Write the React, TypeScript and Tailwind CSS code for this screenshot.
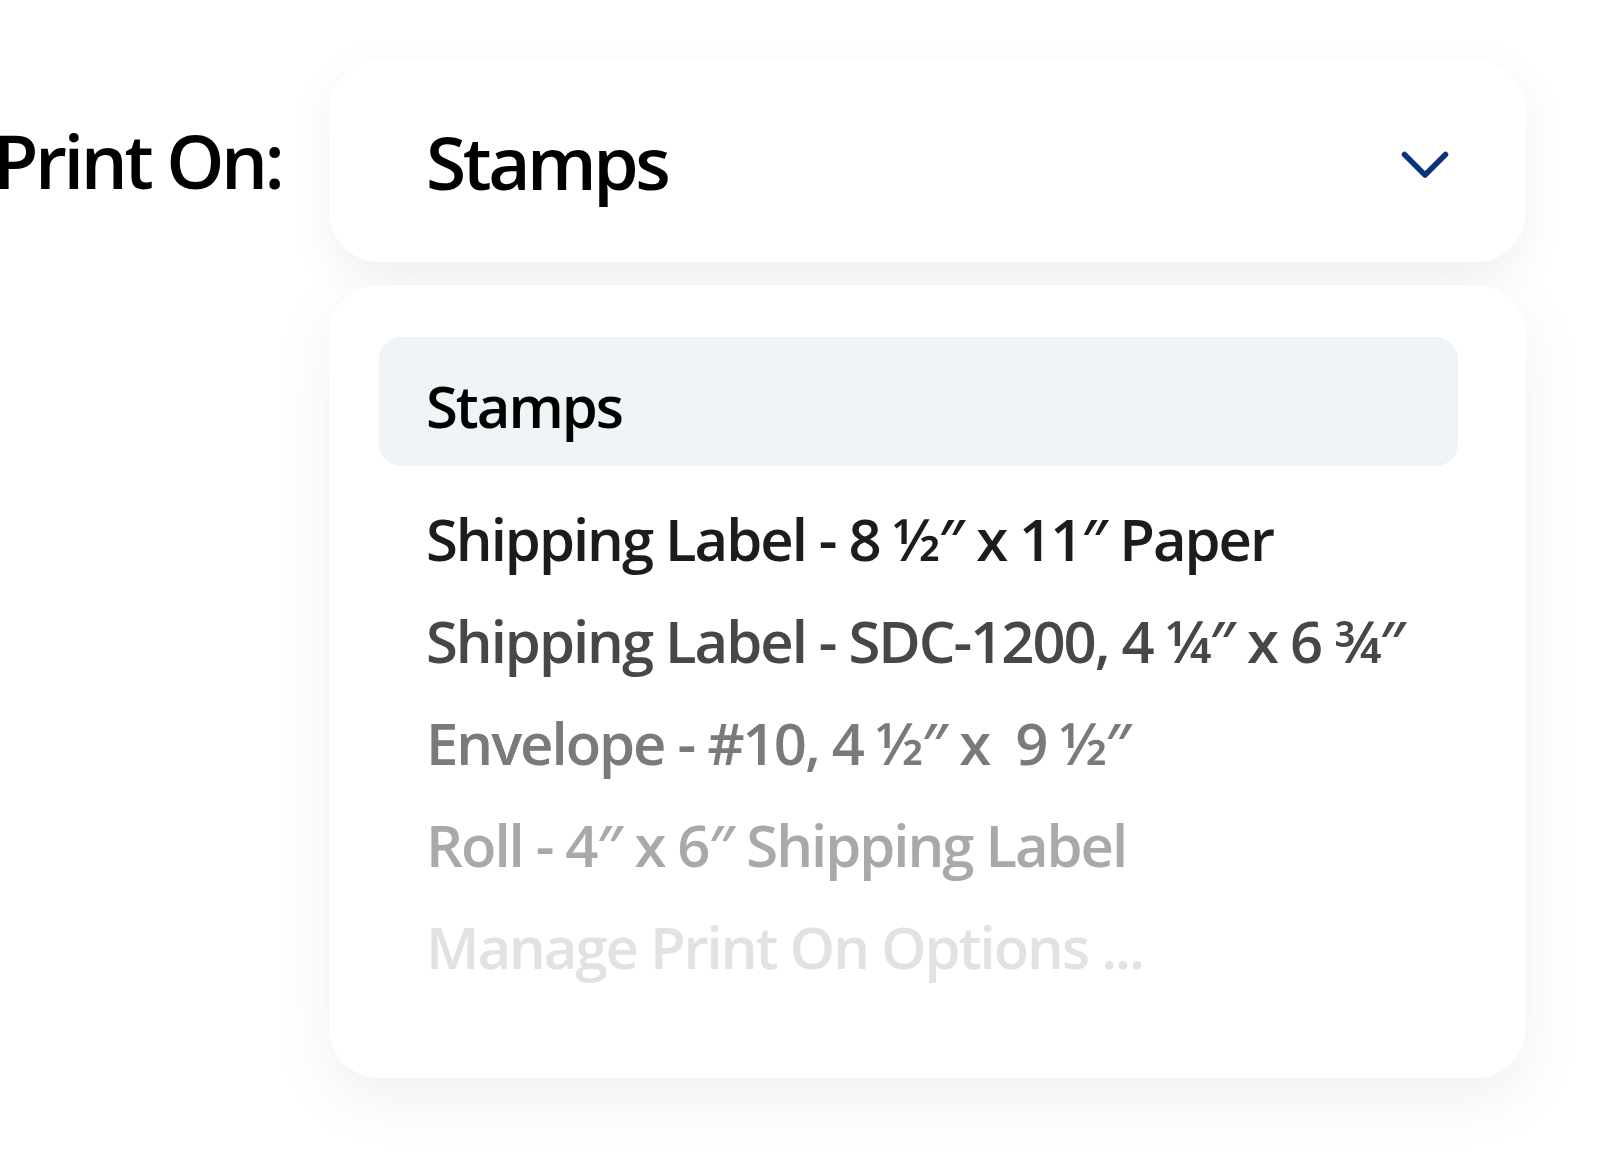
const options = [
  { label: "Shipping Label - 8 ½″ x 11″ Paper", color: "text-[#1c1c1c]" },
  { label: "Shipping Label - SDC-1200, 4 ¼″ x 6 ¾″", color: "text-[#474747]" },
  { label: "Envelope - #10, 4 ½″ x  9 ½″", color: "text-[#7a7a7a]" },
  { label: "Roll - 4″ x 6″ Shipping Label", color: "text-[#a9a9a9]" },
  { label: "Manage Print On Options ...", color: "text-[#e2e2e2]" },
];

export default function App() {
  return (
    <div
      className="w-[1598px] h-[1164px] bg-white overflow-hidden pt-[60px]"
      style={{ fontFamily: '"Open Sans", "Noto Sans", sans-serif' }}
    >
      <div className="flex items-start">
        {/* Label */}
        <div className="w-[336px] ml-[-7px] shrink-0 h-[202px] flex items-center">
          <span className="text-[74px] font-semibold tracking-[-0.046em] text-black leading-none whitespace-nowrap">
            Print On:
          </span>
        </div>

        <div className="w-[1197px] flex flex-col gap-[23px]">
          {/* Select trigger */}
          <div className="h-[202px] rounded-[50px] bg-white shadow-[0_14px_40px_rgba(60,90,120,0.09)] flex items-center justify-between pl-[97px] pr-[77px]">
            <span className="text-[73px] font-semibold tracking-[-0.047em] text-black leading-none">Stamps</span>
            <svg className="w-[48px] h-[30px] mt-[10px]" viewBox="0 0 48 30" fill="none">
              <path
                d="M3.5 3.5 L24 24 L44.5 3.5"
                stroke="#0b327c"
                strokeWidth={5.5}
                strokeLinecap="round"
                strokeLinejoin="round"
              />
            </svg>
          </div>

          {/* Menu */}
          <div className="rounded-[50px] bg-white shadow-[0_20px_60px_rgba(60,90,120,0.09)] pt-[52px] pb-[80px] pl-[50px] pr-[68px]">
            <div className="h-[129px] rounded-[22px] bg-[#eff4f7] flex items-center pl-[47px] pt-2">
              <span className="text-[58px] font-semibold tracking-[-0.035em] text-black">Stamps</span>
            </div>
            <ul className="mt-[22px]">
              {options.map((o) => (
                <li
                  key={o.label}
                  className={`pl-[47px] text-[58px] font-semibold tracking-[-0.035em] leading-[102px] whitespace-pre ${o.color}`}
                >
                  {o.label}
                </li>
              ))}
            </ul>
          </div>
        </div>
      </div>
    </div>
  );
}
